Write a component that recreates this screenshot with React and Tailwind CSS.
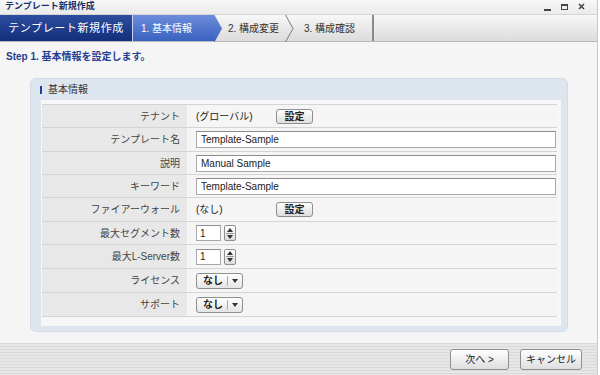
import React from "react";

const font = { fontFamily: '"Liberation Sans", "Noto Sans CJK JP", sans-serif' };

const Btn = ({ children, className = "" }) => (
  <button
    className={`flex items-center justify-center rounded-[3px] border border-[#8f8f8f] bg-gradient-to-b from-white to-[#dedede] text-[10px] text-[#222] ${className}`}
  >
    {children}
  </button>
);

const TextInput = ({ value }) => (
  <div className="flex h-[17px] w-[360px] items-center border border-[#a9a9a9] border-t-[#8c8c8c] bg-white pl-[4px] text-[10px] text-[#222]">
    {value}
  </div>
);

const Spinner = () => (
  <div className="flex items-center gap-[3px]">
    <div className="flex h-[16px] w-[25px] items-center border border-[#a9a9a9] border-t-[#8c8c8c] bg-white pl-[3px] text-[10px] text-[#222]">
      1
    </div>
    <div className="flex h-[16px] w-[12px] flex-col items-center justify-center rounded-[2px] border border-[#8f8f8f] bg-gradient-to-b from-white to-[#dcdcdc] text-[#333]">
      <svg width="6" height="4" viewBox="0 0 6 4"><path d="M3 0 L6 4 L0 4 Z" fill="#333" /></svg>
      <div className="my-[1px] h-px w-[8px] bg-[#999]" />
      <svg width="6" height="4" viewBox="0 0 6 4"><path d="M0 0 L6 0 L3 4 Z" fill="#333" /></svg>
    </div>
  </div>
);

const Select = () => (
  <div className="flex h-[16px] w-[47px] items-center rounded-[3px] border border-[#8f8f8f] bg-gradient-to-b from-white to-[#e4e4e4] text-[10px] font-bold text-[#222]">
    <span className="w-[30px] pl-[6px]">なし</span>
    <div className="h-[10px] w-px bg-[#aaa]" />
    <svg className="ml-[4px]" width="6" height="4" viewBox="0 0 6 4"><path d="M0 0 L6 0 L3 4 Z" fill="#333" /></svg>
  </div>
);

const rows = [
  { label: "テナント", h: "h-[23px]", value: <div className="flex w-full items-center"><span className="w-[80px] text-[10px] text-[#222]">(グローバル)</span><Btn className="h-[15px] w-[37px] font-bold">設定</Btn></div> },
  { label: "テンプレート名", h: "h-[24px]", value: <TextInput value="Template-Sample" /> },
  { label: "説明", h: "h-[23px]", value: <TextInput value="Manual Sample" /> },
  { label: "キーワード", h: "h-[23px]", value: <TextInput value="Template-Sample" /> },
  { label: "ファイアーウォール", h: "h-[24px]", value: <div className="flex w-full items-center"><span className="w-[80px] text-[10px] text-[#222]">(なし)</span><Btn className="h-[15px] w-[37px] font-bold">設定</Btn></div> },
  { label: "最大セグメント数", h: "h-[23px]", value: <Spinner /> },
  { label: "最大L-Server数", h: "h-[24px]", value: <Spinner /> },
  { label: "ライセンス", h: "h-[24px]", value: <Select /> },
  { label: "サポート", h: "h-[24px]", value: <Select /> },
];

export default function App() {
  return (
    <div className="flex h-[375px] w-[600px] overflow-hidden bg-white" style={font}>
      <div className="flex w-[598px] flex-col border-r border-[#c8c8c8] bg-[#f5f5f5]">
        {/* title bar */}
        <div className="flex h-[15px] items-center justify-between border-b border-[#d4d4d4] bg-gradient-to-b from-[#f7f7f7] to-[#ebebeb] px-[5px]">
          <span className="text-[9px] font-bold text-[#1a2f66]">テンプレート新規作成</span>
          <div className="flex items-center gap-[9px] pr-[6px]">
            <svg width="8" height="8" viewBox="0 0 8 8"><rect x="0" y="6" width="7" height="2" fill="#444" /></svg>
            <svg width="8" height="8" viewBox="0 0 8 8"><rect x="0.5" y="1.5" width="6" height="5" fill="none" stroke="#444" strokeWidth="1" /><rect x="0" y="1" width="7" height="2" fill="#444" /></svg>
            <svg width="8" height="8" viewBox="0 0 8 8"><path d="M1 1 L6 6 M6 1 L1 6" stroke="#444" strokeWidth="1.6" /></svg>
          </div>
        </div>

        {/* step tabs */}
        <div className="flex h-[27px] border-b border-[#b8b8b8] bg-gradient-to-b from-[#f8f8f8] via-[#e9e9e9] to-[#dcdcdc]">
          <div className="flex w-[133px] items-center justify-center border-r border-[#c9d4f0] bg-gradient-to-b from-[#2d4d9e] to-[#132f7c] text-[11px] tracking-[0.6px] text-white">
            テンプレート新規作成
          </div>
          <div className="relative z-10 flex w-[81px] items-center bg-gradient-to-b from-[#6d8ddb] to-[#3a61c0] pl-[8px] text-[10px] text-white">
            1. 基本情報
            <svg className="absolute -right-[8px] top-0" width="8" height="27" viewBox="0 0 8 27">
              <defs>
                <linearGradient id="tg" x1="0" y1="0" x2="0" y2="1">
                  <stop offset="0" stopColor="#6d8ddb" />
                  <stop offset="1" stopColor="#3a61c0" />
                </linearGradient>
              </defs>
              <path d="M0 0 L0.5 0 L8 13.5 L0.5 27 L0 27 Z" fill="url(#tg)" />
            </svg>
          </div>
          <div className="relative flex w-[80px] items-center pl-[14px] text-[10px] text-[#333]">
            2. 構成変更
            <svg className="absolute right-0 top-0" width="9" height="27" viewBox="0 0 9 27">
              <path d="M0.5 0 L8 13.5 L0.5 27" fill="none" stroke="#7c7c7c" strokeWidth="1" />
            </svg>
          </div>
          <div className="flex w-[80px] items-center border-r-2 border-[#8a8a8a] pl-[10px] text-[10px] text-[#333]">
            3. 構成確認
          </div>
          <div className="flex-1" />
        </div>

        {/* content */}
        <div className="flex flex-1 flex-col">
          <div className="px-[6px] pt-[7px] text-[10px] font-bold text-[#1e3f94]">
            Step 1. 基本情報を設定します。
          </div>

          <div className="ml-[30px] mt-[14px] w-[538px] rounded-[6px] border border-[#d3dbe6] bg-[#dde5ef] pb-[5px] pl-[10px] pr-[6px]">
            <div className="flex h-[21px] items-center gap-[6px]">
              <div className="-ml-[1px] h-[8px] w-[2px] bg-[#1e3f94]" />
              <span className="text-[10px] text-[#333]">基本情報</span>
            </div>
            <div className="bg-[#f7f7f7] pb-[9px] pl-[1px] pr-[4px] pt-[4px]">
              <div className="border-b border-[#d4d4d4]">
                {rows.map((r) => (
                  <div key={r.label} className={`flex ${r.h} border-t border-[#d4d4d4]`}>
                    <div className="flex w-[145px] items-center justify-end bg-[#e8e8e8] pr-[7px] text-[10px] text-[#444]">
                      {r.label}
                    </div>
                    <div className="flex flex-1 items-center bg-[#f5f5f5] pl-[9px]">{r.value}</div>
                  </div>
                ))}
              </div>
            </div>
          </div>
        </div>

        {/* footer */}
        <div className="flex h-[32px] items-center justify-end gap-[11px] border-t border-[#dadada] bg-[repeating-linear-gradient(to_bottom,#e6e6e6_0px,#e6e6e6_2px,#dadada_2px,#dadada_3px)] pr-[15px]">
          <Btn className="h-[21px] w-[59px]">次へ &gt;</Btn>
          <Btn className="h-[21px] w-[62px]">キャンセル</Btn>
        </div>
      </div>
    </div>
  );
}
